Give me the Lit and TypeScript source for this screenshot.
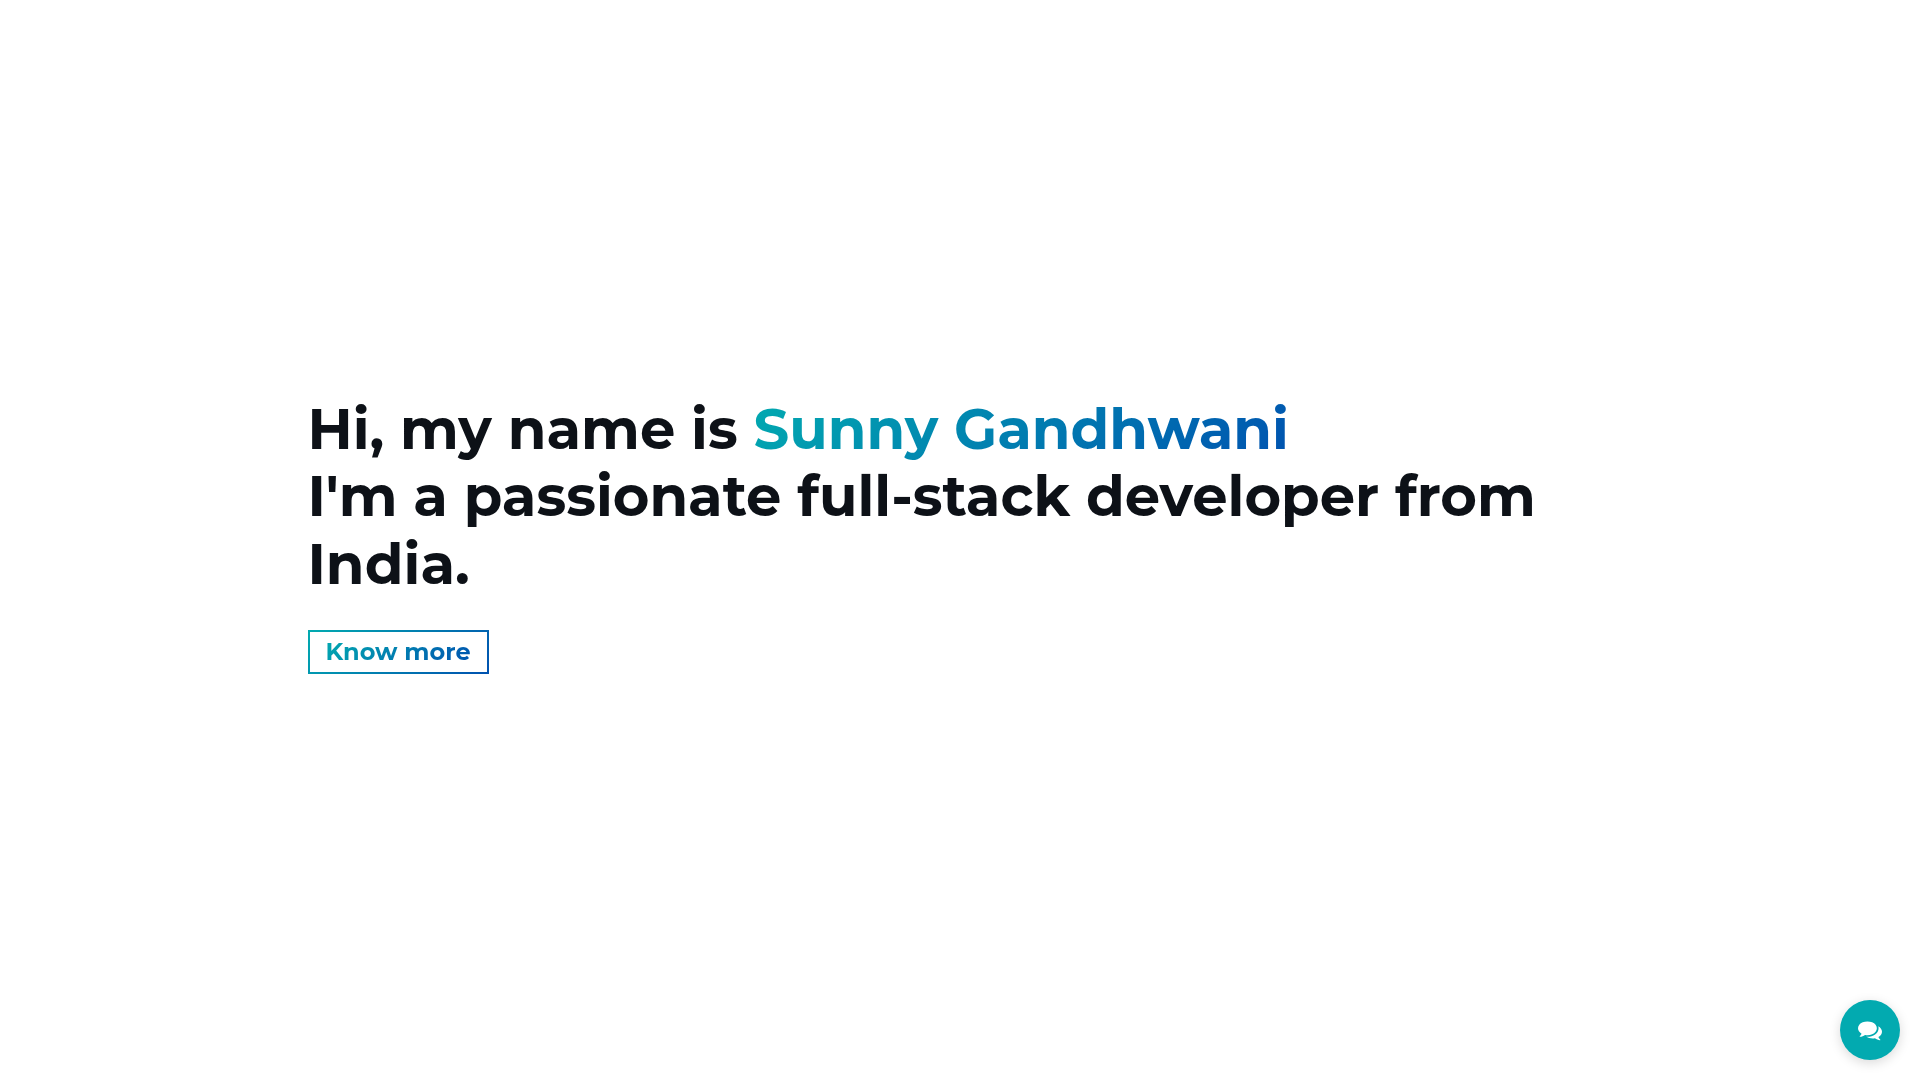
import { LitElement, html, css } from "lit";
import { customElement } from "lit/decorators.js";

@customElement("app-root")
export class AppRoot extends LitElement {
  static styles = css`
    :host {
      --teal: #02aab0;
      --blue: #0052b0;
      --ink: #0d1117;
      --brand: linear-gradient(135deg, var(--teal), var(--blue));
      display: block;
      background: #fff;
      color: var(--ink);
      font-family: Montserrat, Inter, "Open Sans", sans-serif;
      font-weight: 700;
    }
    .hero {
      box-sizing: border-box;
      min-height: 100vh;
      max-width: 1353px;
      margin: 0 auto;
      padding: 0 24px 10px;
      display: flex;
      flex-direction: column;
      justify-content: center;
      align-items: flex-start;
      gap: 32px;
    }
    .title {
      margin: 0;
      font-size: 56px;
      line-height: 1.2;
      font-weight: 700;
    }
    .gradient-text {
      background: var(--brand);
      -webkit-background-clip: text;
      background-clip: text;
      color: transparent;
    }
    .cta {
      padding: 6px 16px;
      border: 2px solid;
      border-image: var(--brand) 1;
      font-size: 24px;
      line-height: 28px;
      text-decoration: none;
    }
    .chat {
      position: fixed;
      right: 20px;
      bottom: 20px;
      width: 60px;
      height: 60px;
      padding: 0;
      border: 0;
      border-radius: 50%;
      background: var(--teal);
      color: #fff;
      box-shadow: 0 3px 12px rgba(0, 0, 0, 0.15);
      display: grid;
      place-items: center;
      cursor: pointer;
    }
    .chat svg {
      width: 24px;
      height: 24px;
      fill: currentColor;
    }
  `;

  render() {
    return html`
      <main class="hero">
        <h1 class="title">
          Hi, my name is <span class="gradient-text">Sunny Gandhwani</span><br />
          I'm a passionate full-stack developer from India.
        </h1>
        <a class="cta" href="#about"><span class="gradient-text">Know more</span></a>
      </main>
      <button class="chat" type="button" aria-label="Chat">
        <svg viewBox="0 0 1792 1792" aria-hidden="true">
          <path
            d="M1408 768q0 139-94 257t-256.5 186.5-353.5 68.5q-86 0-176-16-124 88-278 128-36 9-86 16h-3q-11 0-20.5-8t-11.5-21q-1-3-1-6.5t.5-6.5 2-6l2.5-5 3.5-5.5 4-5 4.5-5 4-4.5q5-6 23-25t26-29.5 22.5-29 25-38.5 20.5-44q-124-72-195-177t-71-224q0-139 94-257t256.5-186.5 353.5-68.5 353.5 68.5 256.5 186.5 94 257zm384 256q0 120-71 224.5t-195 176.5q10 24 20.5 44t25 38.5 22.5 29 26 29.5 23 25q1 1 4 4.5t4.5 5 4 5 3.5 5.5l2.5 5 2 6 .5 6.5-1 6.5q-3 14-13 22t-22 7q-50-7-86-16-154-40-278-128-90 16-176 16-271 0-472-132 58 4 88 4 161 0 309-45t264-129q125-92 192-212t67-254q0-77-23-152 129 71 204 178t75 230z"
          />
        </svg>
      </button>
    `;
  }
}
